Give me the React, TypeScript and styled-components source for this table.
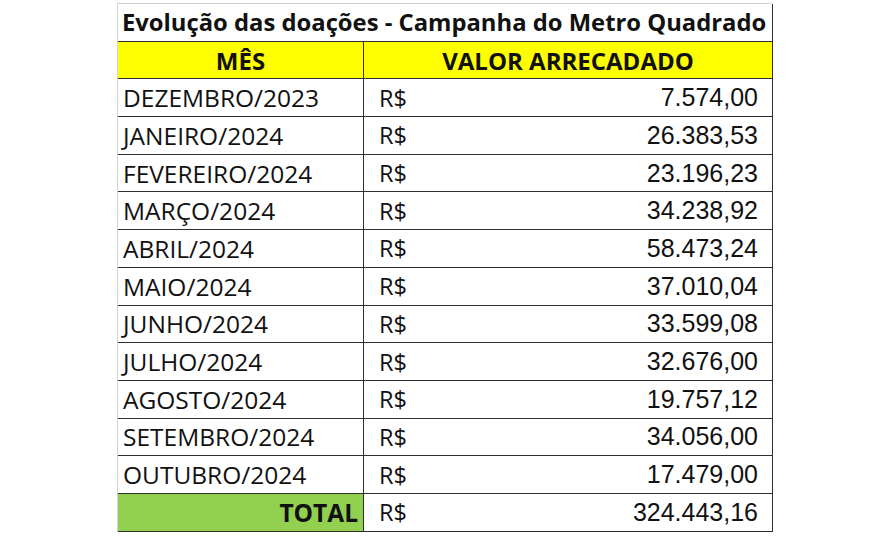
import { Fragment } from "react";
import styled, { createGlobalStyle } from "styled-components";

const GlobalStyle = createGlobalStyle`
  html, body {
    margin: 0;
    padding: 0;
    background: #ffffff;
  }
`;

const Page = styled.div`
  width: 895px;
  height: 540px;
  padding: 3px 0 0 117px;
  box-sizing: border-box;
  background: #ffffff;
`;

const Sheet = styled.div`
  display: grid;
  grid-template-columns: 246px 409px;
  grid-auto-rows: 37.7px;
  width: 655px;
  border-top: 1px solid #d2d2d2;
  border-left: 1px solid #d2d2d2;
  box-sizing: border-box;
`;

interface CellProps {
  $align?: "left" | "center" | "right";
  $bg?: string;
  $bold?: boolean;
  $span?: number;
}

const Cell = styled.div<CellProps>`
  display: flex;
  align-items: center;
  justify-content: ${(p) =>
    p.$align === "center" ? "center" : p.$align === "right" ? "flex-end" : "flex-start"};
  grid-column: span ${(p) => p.$span || 1};
  background: ${(p) => p.$bg || "#ffffff"};
  border-right: 1.5px solid #2e2e2e;
  border-bottom: 1.5px solid #2e2e2e;
  box-sizing: border-box;
  padding: 0 5px;
  font-family: "Open Sans", "Noto Sans", sans-serif;
  font-weight: ${(p) => (p.$bold ? 700 : 400)};
  font-size: 24.5px;
  color: #111111;
  white-space: nowrap;
  overflow: hidden;
`;

const Title = styled(Cell)`
  font-size: 23.8px;
  padding-left: 4px;
`;

const Header = styled(Cell)`
  font-size: 24px;
`;

const Value = styled.div`
  display: flex;
  align-items: center;
  justify-content: space-between;
  width: 100%;
  padding: 0 9px 0 10px;
`;

const Currency = styled.span`
  font-family: "Open Sans", "Noto Sans", sans-serif;
  font-size: 23.5px;
`;

const Amount = styled.span`
  font-family: "Liberation Sans", Arial, sans-serif;
  font-size: 25px;
`;

const rows: [string, string][] = [
  ["DEZEMBRO/2023", "7.574,00"],
  ["JANEIRO/2024", "26.383,53"],
  ["FEVEREIRO/2024", "23.196,23"],
  ["MARÇO/2024", "34.238,92"],
  ["ABRIL/2024", "58.473,24"],
  ["MAIO/2024", "37.010,04"],
  ["JUNHO/2024", "33.599,08"],
  ["JULHO/2024", "32.676,00"],
  ["AGOSTO/2024", "19.757,12"],
  ["SETEMBRO/2024", "34.056,00"],
  ["OUTUBRO/2024", "17.479,00"],
];

const App = () => {
  return (
    <>
      <GlobalStyle />
      <Page>
        <Sheet>
          <Title $span={2} $bold>
            Evolução das doações - Campanha do Metro Quadrado
          </Title>
          <Header $align="center" $bg="#ffff00" $bold>
            MÊS
          </Header>
          <Header $align="center" $bg="#ffff00" $bold>
            VALOR ARRECADADO
          </Header>
          {rows.map(([month, amount]) => (
            <Fragment key={month}>
              <Cell>{month}</Cell>
              <Cell>
                <Value>
                  <Currency>R$</Currency>
                  <Amount>{amount}</Amount>
                </Value>
              </Cell>
            </Fragment>
          ))}
          <Cell $align="right" $bg="#92d050" $bold>
            TOTAL
          </Cell>
          <Cell>
            <Value>
              <Currency>R$</Currency>
              <Amount>324.443,16</Amount>
            </Value>
          </Cell>
        </Sheet>
      </Page>
    </>
  );
};

export default App;
